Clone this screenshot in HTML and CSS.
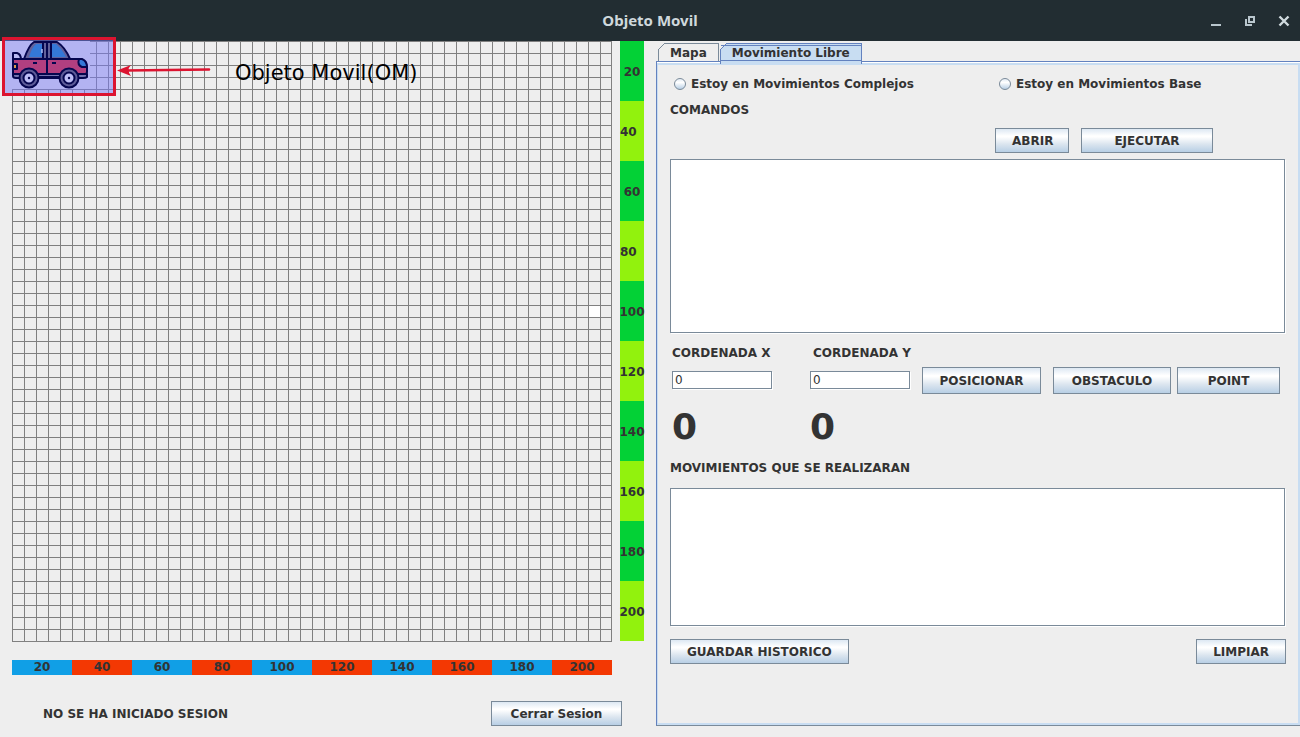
FILE: index.html
```html
<!DOCTYPE html>
<html lang="es">
<head>
<meta charset="utf-8">
<title>Objeto Movil</title>
<link rel="stylesheet" href="styles.css">
</head>
<body>
<header class="titlebar">
  <h1 class="title">Objeto Movil</h1>
  <div class="window-controls">
    <button class="window-button" type="button" aria-label="Minimizar"><svg width="12" height="12" viewBox="0 0 12 12"><path d="M1 9h10v2H1z" fill="#b9c6cd"/></svg></button>
    <button class="window-button" type="button" aria-label="Restaurar"><svg width="12" height="12" viewBox="0 0 12 12" fill="none" stroke="#b9c6cd" stroke-width="2"><path d="M5 2h5v5H5z"/><path d="M2 4v6h6" /></svg></button>
    <button class="window-button" type="button" aria-label="Cerrar"><svg width="12" height="12" viewBox="0 0 12 12"><path d="M1.500 1.500l9 9M10.500 1.500l-9 9" stroke="#d0dade" stroke-width="2.400"/></svg></button>
  </div>
</header>
<main class="workspace">
  <section class="world">
    <div class="board-row">
      <div class="board">
        <div class="target"></div>
        <div class="highlight"></div>
        <svg class="car" width="78" height="48" viewBox="0 0 78 48">
          <rect width="78" height="48" fill="#b3b3f2"/>
          <g stroke="#05064f" stroke-width="2" stroke-linejoin="round">
            <path d="M1 19v-7h4q4 1 4 7" fill="#b9b9f4"/>
            <path d="M12 18Q17 4 22 1h23q8 5 13 17z" fill="#62619b"/>
            <path d="M17 16Q20 6 24 3h6v13z" fill="#3478d8" stroke="none"/>
            <path d="M40 3h4q6 5 10 13H40z" fill="#3478d8" stroke="none"/>
            <path d="M31 1v16M35 1v16M39 1v16" fill="none"/>
            <path d="M30 8v4" stroke="#a9bdf4" fill="none" stroke-width="1.500"/>
            <path d="M1 33h74v3q-1 1-4 1H4q-3 0-3-2z" fill="#7473b0"/>
            <path d="M1 18h66q7 1 8 8v5q0 2-2 2H1z" fill="#b23f80"/>
            <path d="M35 18v15M21 22h4M40 22h4M27 36h21" fill="none"/>
            <path d="M1 23h4v5H1z" fill="#d79a52"/>
            <path d="M67 18q-2 6 3 8h5q0-6-5-8z" fill="#3478d8"/>
            <circle cx="17" cy="37" r="9.500" fill="#5d5c98"/>
            <circle cx="57" cy="37" r="9.500" fill="#5d5c98"/>
            <circle cx="17" cy="37" r="5.500" fill="#bdbdf5"/>
            <circle cx="57" cy="37" r="5.500" fill="#bdbdf5"/>
          </g>
          <g fill="#05064f"><circle cx="17" cy="37" r="1.200"/><circle cx="57" cy="37" r="1.200"/></g>
        </svg>
        <svg class="arrow" width="96" height="12" viewBox="0 0 96 12"><path d="M9 6.500L92 5.500" stroke="#dc1430" stroke-width="2.600" stroke-linecap="round"/><path d="M0 6.500L14 1q-5 5 0 11z" fill="#dc1430"/></svg>
        <p class="note">Objeto Movil(OM)</p>
      </div>
      <ol class="ruler ruler-y">
        <li>20</li><li>40</li><li>60</li><li>80</li><li>100</li><li>120</li><li>140</li><li>160</li><li>180</li><li>200</li>
      </ol>
    </div>
    <ol class="ruler ruler-x">
      <li>20</li><li>40</li><li>60</li><li>80</li><li>100</li><li>120</li><li>140</li><li>160</li><li>180</li><li>200</li>
    </ol>
    <footer class="session">
      <span>NO SE HA INICIADO SESION</span>
      <button class="button session-button" type="button">Cerrar Sesion</button>
    </footer>
  </section>
  <section class="side">
    <div class="tabs" role="tablist">
      <button class="tab" type="button" role="tab" aria-selected="false">Mapa</button>
      <button class="tab tab-selected" type="button" role="tab" aria-selected="true">Movimiento Libre</button>
    </div>
    <form class="panel">
      <div class="modes">
        <label class="mode"><input class="radio" type="radio" name="mode">Estoy en Movimientos Complejos</label>
        <label class="mode"><input class="radio" type="radio" name="mode">Estoy en Movimientos Base</label>
      </div>
      <label class="commands-label" for="commands">COMANDOS</label>
      <div class="command-actions">
        <button class="button open" type="button">ABRIR</button>
        <button class="button run" type="button">EJECUTAR</button>
      </div>
      <textarea class="area area-commands" id="commands"></textarea>
      <div class="coordinates">
        <div class="coordinate coordinate-x">
          <label for="x">CORDENADA X</label>
          <input class="field" id="x" type="text" value="0">
          <output class="value" for="x">0</output>
        </div>
        <div class="coordinate coordinate-y">
          <label for="y">CORDENADA Y</label>
          <input class="field" id="y" type="text" value="0">
          <output class="value" for="y">0</output>
        </div>
        <div class="coordinate-actions">
          <button class="button place" type="button">POSICIONAR</button>
          <button class="button obstacle" type="button">OBSTACULO</button>
          <button class="button point" type="button">POINT</button>
        </div>
      </div>
      <label class="moves-label" for="moves">MOVIMIENTOS QUE SE REALIZARAN</label>
      <textarea class="area area-moves" id="moves"></textarea>
      <div class="history">
        <button class="button" type="button">GUARDAR HISTORICO</button>
        <button class="button" type="button">LIMPIAR</button>
      </div>
    </form>
  </section>
</main>
</body>
</html>
```
FILE: styles.css
```css
* { box-sizing: border-box; }

body {
  margin: 0;
  min-height: 100vh;
  display: flex;
  flex-direction: column;
  background: #eee;
  color: #333;
  font: bold 12px/16px "DejaVu Sans", sans-serif;
}

button, input, textarea { font: inherit; color: inherit; margin: 0; }
ol { list-style: none; margin: 0; padding: 0; }

/* Title bar */
.titlebar {
  display: grid;
  grid-template-columns: 1fr auto 1fr;
  align-items: center;
  height: 41px;
  padding: 0 10px 2px;
  background: #222d32;
}
.title {
  grid-column: 2;
  margin: 0;
  color: #cfd8dc;
  font: bold 15px/20px "Noto Sans", sans-serif;
}
.window-controls { display: flex; justify-content: flex-end; gap: 22px; padding-top: 2px; }
.window-button { display: flex; padding: 0; border: 0; background: none; }

.workspace { flex: 1; display: grid; grid-template-columns: 656px 1fr; }

/* Map */
.world { padding: 0 12px; }
.board-row { display: flex; gap: 8px; }
.board {
  position: relative;
  width: 600px;
  height: 601px;
  border-right: 1px solid #808080;
  background:
    repeating-linear-gradient(90deg, #808080 0 1px, transparent 1px 12px),
    repeating-linear-gradient(#808080 0 1px, #eee 1px 12px);
}
.target {
  position: absolute;
  left: 577px;
  top: 265px;
  width: 11px;
  height: 11px;
  background: #fff;
}
.car { position: absolute; left: 0; top: 0; }
.highlight {
  position: absolute;
  left: -10px;
  top: -4px;
  width: 114px;
  height: 59px;
  border: 3px solid #dc1430;
  background: rgba(120, 120, 245, 0.5);
}
.arrow { position: absolute; left: 105px; top: 23px; }
.note {
  position: absolute;
  left: 223px;
  top: 20px;
  margin: 0;
  color: #000;
  font-size: 21px;
  font-weight: normal;
  line-height: 24px;
  white-space: nowrap;
}
.ruler { display: grid; }
.ruler li { display: flex; align-items: center; justify-content: center; }
.ruler-y { width: 24px; height: 600px; grid-template: repeat(10, 1fr) / 24px; }
.ruler-y li { background: #03d136; padding-top: 1px; }
.ruler-y li:nth-child(even) { background: #92f20d; }
.ruler-y li:nth-child(-n+4):nth-child(even) { justify-content: flex-start; }
.ruler-x { width: 600px; margin-top: 18px; grid-template-columns: repeat(10, 1fr); line-height: 15px; }
.ruler-x li { background: #109fe6; }
.ruler-x li:nth-child(even) { background: #f33803; }
.session {
  display: flex;
  align-items: center;
  justify-content: space-between;
  margin-top: 26px;
  padding: 0 22px 0 31px;
}
.session-button { width: 131px; }

.button {
  height: 25px;
  padding: 0 16px;
  border: 1px solid #7a8a99;
  background: linear-gradient(#dde8f3, #fff 30%, #fff 34%, #dbe5ef 66%, #b8cfe5);
  white-space: nowrap;
}

/* Tabs */
.side { display: flex; flex-direction: column; min-width: 0; padding: 2px 0 11px; }
.tabs { display: flex; gap: 1px; padding-left: 2px; }
.tab {
  position: relative;
  height: 18px;
  padding: 0 11px;
  border: 1px solid #7a8a99;
  border-bottom: 0;
  background: #eee;
}
.tab::before {
  content: "";
  position: absolute;
  left: -1px;
  top: -1px;
  width: 7px;
  height: 7px;
  background: linear-gradient(135deg, #eee 44%, #7a8a99 44% 56%, transparent 56%);
}
.tab-selected {
  z-index: 1;
  height: 21px;
  margin-bottom: -3px;
  padding-bottom: 3px;
  border-color: #6382bf;
  background: #c8ddf2;
}
.tab-selected::before {
  background: linear-gradient(135deg, #eee 44%, #6382bf 44% 56%, transparent 56%);
}
.tab-selected::after {
  content: "";
  position: absolute;
  inset: 1px 0 3px;
  border: solid #6382bf;
  border-width: 1px 0;
}

/* Form */
.panel {
  flex: 1;
  display: flex;
  flex-direction: column;
  padding: 12px 12px 0 13px;
  border: 1px solid #6382bf;
  border-right: 0;
  border-bottom-color: #7a8a99;
  box-shadow: inset 0 1px #fff, inset 0 3px #c8ddf2, inset 1px -2px #c8ddf2, inset -2px 0 #c8ddf2;
}
.modes { display: grid; grid-template-columns: 325px 1fr; padding: 2px 4px 0; }
.mode { display: flex; align-items: center; gap: 5px; }
.radio {
  appearance: none;
  width: 12px;
  height: 12px;
  border: 1px solid #7a8a99;
  border-radius: 50%;
  background: linear-gradient(#e4edf6, #fff 35%, #b8cfe5);
}
.commands-label { margin: 10px 0; }
.command-actions { display: flex; justify-content: flex-end; gap: 12px; padding-right: 75px; }
.open { width: 74px; }
.run { width: 132px; }
.area {
  display: block;
  width: calc(100% - 3px);
  margin: 0;
  padding: 2px;
  border: 1px solid #7a8a99;
  border-radius: 0;
  background: #fff;
  box-shadow: 1px 1px #fff;
  resize: none;
}
.area-commands { height: 174px; margin-top: 6px; }
.area-moves { height: 138px; margin-top: 12px; }
.coordinates { display: flex; padding: 12px 8px 0 2px; }
.coordinate { display: flex; flex-direction: column; width: 100px; }
.coordinate-x { margin-right: 38px; }
.coordinate-y { margin-right: 12px; }
.coordinate-y label { padding-left: 3px; }
.coordinate label { white-space: nowrap; }
.field {
  width: 100%;
  height: 18px;
  margin-top: 10px;
  padding: 0 2px;
  border: 1px solid #7a8a99;
  border-radius: 0;
  background: #fff;
  box-shadow: 1px 1px #fff;
  font-weight: normal;
}
.value { margin-top: 18px; font-size: 36px; line-height: 40px; }
.coordinate-actions {
  flex: 1;
  display: grid;
  grid-template-columns: 119fr 12px 118fr 6px 103fr;
  align-items: start;
  padding-top: 22px;
}
.coordinate-actions .button { height: 27px; padding: 0 8px; }
.place { grid-column: 1; }
.obstacle { grid-column: 3; }
.point { grid-column: 5; }
.moves-label { margin: 13px 0 0; }
.history { display: flex; justify-content: space-between; padding: 13px 2px 0 0; }
```
